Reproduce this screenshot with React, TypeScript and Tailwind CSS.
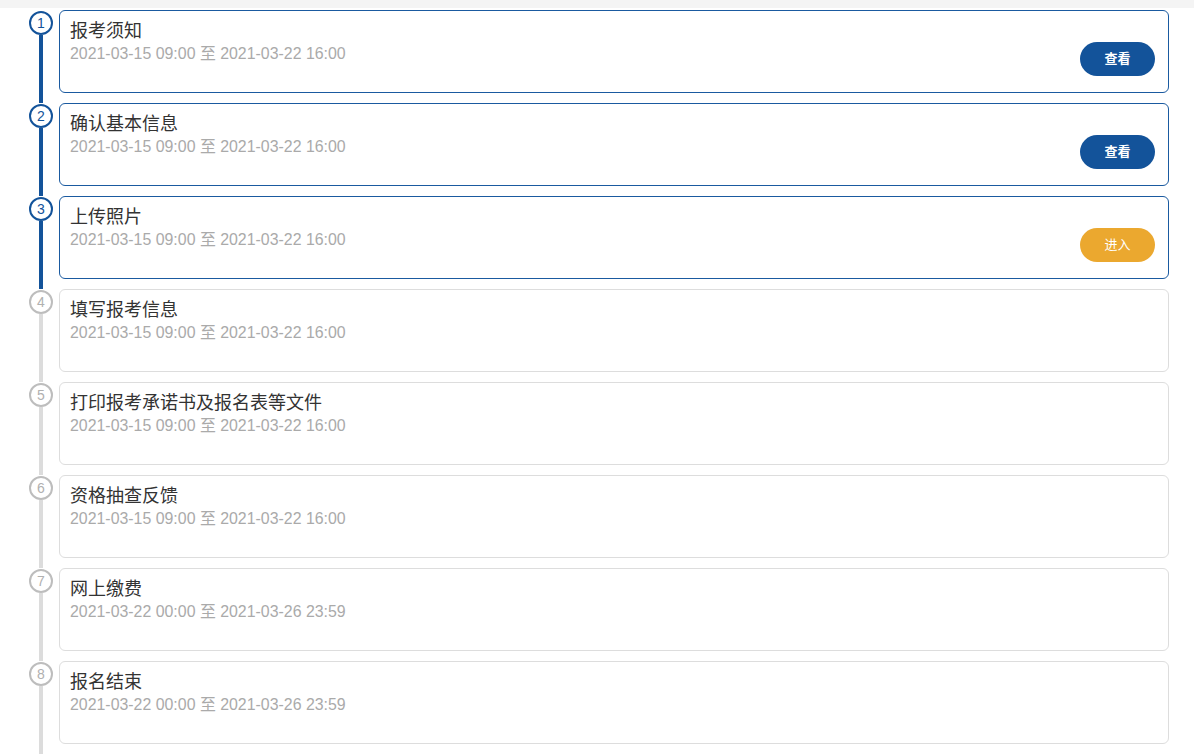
import React from "react";

type Step = { title: string; time: string; status: "done" | "current" | "todo"; action?: string };

const steps: Step[] = [
  { title: "报考须知", time: "2021-03-15 09:00 至 2021-03-22 16:00", status: "done", action: "查看" },
  { title: "确认基本信息", time: "2021-03-15 09:00 至 2021-03-22 16:00", status: "done", action: "查看" },
  { title: "上传照片", time: "2021-03-15 09:00 至 2021-03-22 16:00", status: "current", action: "进入" },
  { title: "填写报考信息", time: "2021-03-15 09:00 至 2021-03-22 16:00", status: "todo" },
  { title: "打印报考承诺书及报名表等文件", time: "2021-03-15 09:00 至 2021-03-22 16:00", status: "todo" },
  { title: "资格抽查反馈", time: "2021-03-15 09:00 至 2021-03-22 16:00", status: "todo" },
  { title: "网上缴费", time: "2021-03-22 00:00 至 2021-03-26 23:59", status: "todo" },
  { title: "报名结束", time: "2021-03-22 00:00 至 2021-03-26 23:59", status: "todo" },
];

export default function App() {
  return (
    <div
      className="min-h-screen bg-white"
      style={{ fontFamily: '"Liberation Sans", Arial, "Noto Sans CJK SC", sans-serif' }}
    >
      <div className="h-[8px] bg-[#f4f4f4]" />
      <div className="pt-[2px] pr-[25px]">
        {steps.map((s, i) => {
          const active = s.status !== "todo";
          return (
            <div key={i} className="flex">
              <div className="w-[59px] shrink-0 flex">
                <div className="ml-[29px] w-[24px] flex flex-col items-center pt-[1px]">
                  <div
                    className={
                      active
                        ? "w-[24px] h-[24px] rounded-full border-2 border-[#13539a] bg-white flex items-center justify-center text-[14px] leading-none text-[#13539a] font-light"
                        : "w-[24px] h-[24px] rounded-full border-2 border-[#bdbdbd] bg-white flex items-center justify-center text-[14px] leading-none text-[#b0b0b0] font-light"
                    }
                  >
                    {i + 1}
                  </div>
                  <div className={active ? "flex-1 w-[4px] bg-[#13539a]" : "flex-1 w-[4px] bg-[#dcdcdc]"} />
                </div>
              </div>
              <div className="flex-1 pb-[10px]">
                <div
                  className={
                    active
                      ? "h-[83px] border border-[#1a5aa0] rounded-[6px] flex pl-[10px] pr-[13px] pt-[8px]"
                      : "h-[83px] border border-[#dddddd] rounded-[6px] flex pl-[10px] pr-[13px] pt-[8px]"
                  }
                >
                  <div className="flex-1">
                    <div className="text-[18px] leading-[24px] text-[#333333]">{s.title}</div>
                    <div className="text-[15.9px] leading-[22px] text-[#aaaaaa]">{s.time}</div>
                  </div>
                  {s.action && (
                    <button
                      className={
                        s.status === "current"
                          ? "mt-[23px] w-[75px] h-[34px] rounded-full bg-[#eba82f] text-white text-[13px]"
                          : "mt-[23px] w-[75px] h-[34px] rounded-full bg-[#13539a] text-white text-[13px] font-bold"
                      }
                    >
                      {s.action}
                    </button>
                  )}
                </div>
              </div>
            </div>
          );
        })}
      </div>
    </div>
  );
}
